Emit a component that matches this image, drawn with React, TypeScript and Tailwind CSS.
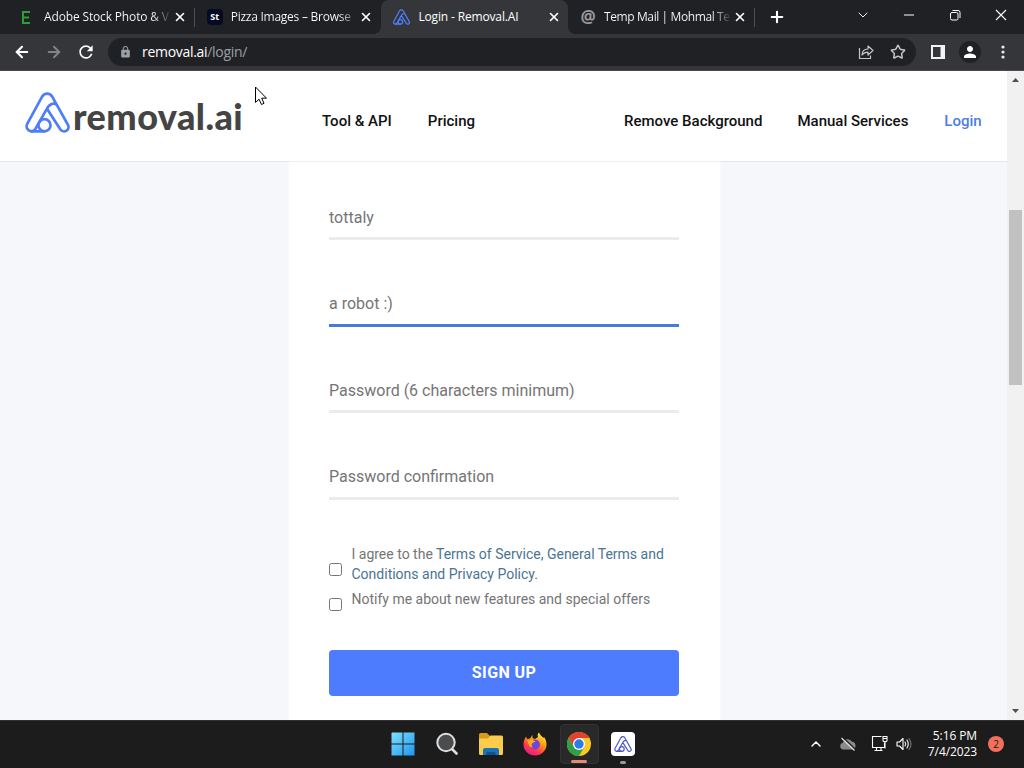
import { ArrowLeft, ArrowRight, ChevronDown, ChevronUp, Minus, Plus, Star, X } from "lucide-react"
import { MdLock, MdPerson, MdRefresh } from "react-icons/md"

const tabs = [
    { title: "Adobe Stock Photo & V", icon: "E", active: false, separator: true, tracking: "tracking-[-0.15px]" },
    { title: "Pizza Images – Browse", icon: "St", active: false, separator: false, tracking: "tracking-[-0.25px]" },
    { title: "Login - Removal.AI", icon: "logo", active: true, separator: false, tracking: "tracking-[-0.15px]" },
    { title: "Temp Mail | Mohmal Te", icon: "@", active: false, separator: true, tracking: "tracking-[-0.4px]" },
];

function LogoMark({ className, color = "#4f7df9", stroke = 8 }: { className?: string; color?: string; stroke?: number }) {
    return (
        <svg className={className} viewBox="0 0 134 122" fill="none" stroke={color} strokeWidth={stroke} strokeLinecap="round" strokeLinejoin="round">
            <path d="M67 52L105 111C115 125 137 113 127 96L81 14C74 2 58 2 51 14L7 94C-2 111 20 126 31 110L65 50C73 34 87 31 94 38" />
            <circle cx="58" cy="99" r="18" />
            <path d="M18 117H58" />
        </svg>
    );
}

function TabIcon({ icon }: { icon: string }) {
    if (icon === "logo") return <LogoMark className="w-[17px] h-4" stroke={10} />;
    if (icon === "St") return <span className="w-4 h-4 rounded-sm bg-[#050a23] text-white text-[9px] leading-4 font-bold text-center">St</span>;
    if (icon === "E") {
        return (
            <svg className="w-4 h-4" viewBox="0 0 16 16" fill="none" stroke="#2f9e35" strokeWidth="2">
                <path d="M10 3H3V14H10M3 8.5H9" />
            </svg>
        );
    }
    return <span className="w-4 text-center text-[#97989b] text-[17px] leading-4 font-bold">@</span>;
}

function TabStrip() {
    return (
        <div className="flex h-[34px] pl-2 bg-[#202124] text-white">
            {tabs.map((tab) => (
                <div
                    key={tab.title}
                    className={`relative flex items-center h-[34px] w-[186.7px] pl-3 ${tab.active ? "bg-[#35363a] rounded-t-lg" : ""}`}
                >
                    <TabIcon icon={tab.icon} />
                    <span
                        className={`ml-2 w-[127px] whitespace-nowrap text-[12px] ${tab.tracking} ${tab.active ? "" : "text-transparent bg-clip-text bg-linear-to-r from-white from-[108px] to-transparent to-[128px]"}`}
                    >
                        {tab.title}
                    </span>
                    <X className="w-3.5 h-3.5 shrink-0 ml-[1.5px]" strokeWidth={2.8} />
                    {tab.separator && <span className="absolute right-0 top-2 w-px h-[19px] bg-[#4c4d51]" />}
                    {tab.active && (
                        <>
                            <span className="absolute -left-2 bottom-0 size-2 bg-[radial-gradient(circle_at_0_0,transparent_8px,#35363a_8px)]" />
                            <span className="absolute -right-2 bottom-0 size-2 bg-[radial-gradient(circle_at_100%_0,transparent_8px,#35363a_8px)]" />
                        </>
                    )}
                </div>
            ))}
            <Plus className="w-[18px] h-[18px] ml-[13px] mt-2" strokeWidth={2.8} />
            {/* Window controls */}
            <div className="flex ml-auto h-[29px]">
                <span className="flex items-center justify-center w-[46px]"><ChevronDown className="w-4 h-4" strokeWidth={1.4} /></span>
                <span className="flex items-center justify-center w-[46px]"><Minus className="w-4 h-4" strokeWidth={1.5} /></span>
                <span className="flex items-center justify-center w-[46px]">
                    <svg className="w-3 h-3" viewBox="0 0 12 12" fill="none" stroke="white">
                        <rect x="1.5" y="3.5" width="7.5" height="7.5" rx="1.5" />
                        <path d="M3.5 1.5H9A2 2 0 0 1 11 3.5V9" />
                    </svg>
                </span>
                <span className="flex items-center justify-center w-[46px]">
                    <svg className="w-3 h-3" viewBox="0 0 12 12" stroke="white" strokeWidth="1.1"><path d="M1 1L11 11M11 1L1 11" /></svg>
                </span>
            </div>
        </div>
    );
}

function Toolbar() {
    return (
        <div className="flex items-center h-[37px] bg-[#35363a] border-b border-[#4d494b] pl-[13px] text-white">
            <ArrowLeft className="w-[18px] h-[18px]" strokeWidth={2.8} />
            <ArrowRight className="w-[18px] h-[18px] ml-3.5 text-[#828387]" strokeWidth={2.6} />
            <MdRefresh className="w-5 h-5 ml-[13px]" />
            <div className="flex items-center w-[808px] h-7 ml-3 pl-[11px] pr-2.5 rounded-full bg-[#202124]">
                <MdLock className="w-[13px] h-[14px] text-[#9aa0a6]" />
                <span className="ml-2.5 text-sm tracking-[-0.3px]">removal.ai<span className="text-[#9aa0a6]">/login/</span></span>
                <svg className="w-4 h-4 ml-auto" viewBox="0 0 16 16" fill="none" stroke="#c4c7c9" strokeWidth="1.2" strokeLinejoin="round">
                    <path d="M1.5 4V14.5H12.5V11.5" />
                    <path d="M4 11C4 7.5 6 5.2 10 5V2L15 6.5L10 11V8.2C7.3 8.2 5.5 9 4 11Z" />
                </svg>
                <Star className="w-4 h-4 ml-4 text-[#c4c7c9]" strokeWidth={2.2} strokeLinejoin="miter" />
            </div>
            <svg className="w-3.5 h-3.5 ml-[15px]" viewBox="0 0 14 14" fill="none" stroke="#f1f3f4" strokeWidth="2">
                <rect x="1" y="1" width="12" height="12" />
                <path d="M9.5 0H14V14H9.5Z" fill="#f1f3f4" stroke="none" />
            </svg>
            <span className="flex items-center justify-center w-[22px] h-[22px] ml-3.5 rounded-full bg-[#202124]"><MdPerson className="w-[18px] h-[18px]" /></span>
            <svg className="w-1 h-4 ml-5" viewBox="0 0 4 16" fill="#e8eaed">
                <circle cx="2" cy="3" r="1.6" />
                <circle cx="2" cy="8" r="1.6" />
                <circle cx="2" cy="13" r="1.6" />
            </svg>
        </div>
    );
}

function SiteHeader() {
    return (
        <div className="flex items-center shrink-0 h-[91px] bg-white border-b border-[#e4e6ea] text-[#111] font-medium text-[15px]">
            <LogoMark className="w-[45px] h-[41px] ml-[25px] mb-2" />
            <span className="w-[174px] pl-[3px] font-[Lato,sans-serif] font-black text-[36px] tracking-[0.45px] text-[#444]">removal.ai</span>
            <nav className="flex mt-[11px]">
                <span className="ml-[78px]">Tool &amp; API</span>
                <span className="ml-9">Pricing</span>
                <span className="ml-[149px]">Remove Background</span>
                <span className="ml-[35px]">Manual Services</span>
                <span className="ml-9 text-[#4d7ce8]">Login</span>
            </nav>
        </div>
    );
}

function Field({ label, active }: { label: string; active?: boolean }) {
    return (
        <div className={`flex items-center h-[46px] pt-1 mb-[40.5px] border-b-[3px] text-base ${active ? "border-[#4a7bd8]" : "border-[#ebebeb]"}`}>
            <span>{label}</span>
        </div>
    );
}

function Checkbox({ className }: { className: string }) {
    return <span className={`shrink-0 w-[13px] h-[13px] border border-[#767676] rounded-[2.5px] bg-white ${className}`} />;
}

function SignUpForm() {
    return (
        <div className="flex-1 w-[431px] ml-[289px] pl-10 pr-[41px] pt-8 bg-white shadow-[0_0_4px_rgba(255,255,255,0.8)]">
            <Field label="tottaly" />
            <Field label="a robot :)" active />
            <Field label="Password (6 characters minimum)" />
            <Field label="Password confirmation" />
            <div className="flex mt-[44.5px] text-sm leading-5">
                <Checkbox className="mt-[19px]" />
                <p className="ml-[9.5px]">
                    I agree to the <span className="text-[#4a7493]">Terms of Service, General Terms and<br />Conditions and Privacy Policy.</span>
                </p>
            </div>
            <div className="flex mt-[5px] text-sm leading-5">
                <Checkbox className="mt-[9px]" />
                <p className="ml-[9.5px]">Notify me about new features and special offers</p>
            </div>
            <button className="block w-full h-[46px] mt-[39px] rounded bg-[#4d7cfe] text-white font-bold tracking-[0.4px]">SIGN UP</button>
        </div>
    );
}

function Scrollbar() {
    return (
        <div className="flex flex-col items-center w-[17px] h-full bg-[#f1f1f1]">
            <svg className="w-[7px] h-1 mt-[7px]" viewBox="0 0 7 4" fill="#505050"><path d="M0 4L3.5 0L7 4Z" /></svg>
            <span className="w-[13px] h-[175px] mt-[128px] bg-[#c1c1c1]" />
            <svg className="w-[7px] h-1 mt-auto mb-[7px]" viewBox="0 0 7 4" fill="#505050"><path d="M0 0L3.5 4L7 0Z" /></svg>
        </div>
    );
}

function WindowsIcon() {
    return (
        <svg className="w-6 h-6" viewBox="0 0 24 24">
            <defs>
                <linearGradient id="win" x1="0" y1="0" x2="1" y2="1">
                    <stop offset="0" stopColor="#7fe0fb" />
                    <stop offset="1" stopColor="#1e96ee" />
                </linearGradient>
            </defs>
            <path d="M1 .5H11.5V11.5H.5V1ZM12.5 .5H23.5V11.5H12.5ZM.5 12.5H11.5V23.5H.5ZM12.5 12.5H23.5V23.5H12.5Z" fill="url(#win)" />
        </svg>
    );
}

function SearchIcon() {
    return (
        <svg className="w-6 h-6" viewBox="0 0 24 24" fill="#4a4c4e" stroke="#dedede">
            <path d="M17 17L21.5 21.5" strokeWidth="2.6" strokeLinecap="round" />
            <circle cx="11" cy="10.5" r="8.7" strokeWidth="2" />
        </svg>
    );
}

function FolderIcon() {
    return (
        <svg className="w-6 h-6" viewBox="0 0 24 24">
            <path d="M0 2.5Q0 1 1.5 1H8L11 4V8H0Z" fill="#d99a16" />
            <path d="M0 6.5H9L11.5 3.5H22.5Q24 3.5 24 5V21.5Q24 23 22.5 23H1.5Q0 23 0 21.5Z" fill="#fbcb4b" />
            <path d="M4 23V18Q4 16 6 16H18Q20 16 20 18V23Z" fill="#1873b8" />
            <path d="M7.5 23V21Q7.5 20 8.5 20H15.5Q16.5 20 16.5 21V23Z" fill="#0d5590" />
        </svg>
    );
}

function FirefoxIcon() {
    return (
        <svg className="w-6 h-6" viewBox="0 0 24 24">
            <defs>
                <linearGradient id="fox" x1="0.8" y1="0" x2="0.25" y2="1">
                    <stop offset="0" stopColor="#fff44f" />
                    <stop offset="0.4" stopColor="#ff980e" />
                    <stop offset="0.7" stopColor="#ff3b50" />
                    <stop offset="1" stopColor="#e5178c" />
                </linearGradient>
            </defs>
            <path d="M3 4.5L4.2 7L7 6.5L9.5 3V6L12 7L15 5C14 3 15 1.5 16 .5C17 3.5 19 4 20.5 6L21 5C23 8 23.5 10 23.5 12.5A11.5 11 0 0 1 .5 12.5C.5 9.5 1.5 7 3 4.5Z" fill="url(#fox)" />
            <circle cx="12" cy="12.5" r="5" fill="#7545d8" />
            <path d="M4.5 8.5Q9 6.5 12.5 9.5L9.5 11Q7.5 13 10 15.5Q5 15 4.5 8.5Z" fill="#ffac24" />
        </svg>
    );
}

function ChromeIcon() {
    return (
        <svg className="w-6 h-6" viewBox="0 0 24 24">
            <circle cx="12" cy="12" r="12" fill="#fbc926" />
            <path d="M1.6 6A12 12 0 0 1 22.4 6H12L6.8 15Z" fill="#e2412f" />
            <path d="M1.6 6A12 12 0 0 0 12 24L17.2 15L12 12L6.8 15Z" fill="#2da04a" />
            <circle cx="12" cy="12" r="6" fill="white" />
            <circle cx="12" cy="12" r="4.7" fill="#2b7bea" />
        </svg>
    );
}

function Taskbar() {
    return (
        <div className="flex items-center h-12 pb-0.5 bg-[#1c1c1c] border-t border-[#303030] text-white">
            <div className="flex items-center ml-[381px]">
                <span className="flex justify-center w-11"><WindowsIcon /></span>
                <span className="flex justify-center w-11"><SearchIcon /></span>
                <span className="flex justify-center w-11"><FolderIcon /></span>
                <span className="flex justify-center w-11"><FirefoxIcon /></span>
                <span className="relative flex items-center justify-center w-[39px] h-10 mx-[2.5px] rounded bg-[#292929] border border-[#323232]">
                    <ChromeIcon />
                    <span className="absolute bottom-0 w-4 h-[3px] rounded-full bg-[#ec8872]" />
                </span>
                <span className="relative flex items-center justify-center w-11 h-10">
                    <span className="flex items-center justify-center w-6 h-6 rounded bg-white"><LogoMark className="w-[18px] h-4" color="#4e57c8" stroke={9} /></span>
                    <span className="absolute bottom-0 w-1.5 h-[3px] rounded-full bg-[#9a9a9a]" />
                </span>
            </div>
            {/* System tray */}
            <ChevronUp className="w-4 h-4 ml-[163px]" strokeWidth={2.2} />
            <svg className="w-4 h-4 ml-4" viewBox="0 0 16 16">
                <path d="M3.5 13.5A3.4 3.4 0 0 1 2.8 6.8A5 5 0 0 1 12 5.8A3.9 3.9 0 0 1 12.4 13.5Z" fill="#8b8b8b" />
                <path d="M2.5 1L15.5 13.5" stroke="#1c1c1c" strokeWidth="1.2" />
                <path d="M1.5 2L14.5 14.5" stroke="#dedede" strokeWidth="1.2" />
            </svg>
            <svg className="w-[17px] h-[17px] ml-[15px]" viewBox="0 0 17 17" fill="none" stroke="white" strokeWidth="1.1">
                <path d="M10.5 1.5H1.5V12.5H13.5V7.5M5.5 12.5V15.5M10 12.5V15.5M3.5 15.5H11.5" />
                <path d="M12 1.5H16V5.5Q16 6.5 15 6.5H13Q12 6.5 12 5.5ZM14 6.5V13.5M12 3.5H16" />
            </svg>
            <svg className="w-4 h-4 ml-2" viewBox="0 0 16 16" fill="none" stroke="white" strokeWidth="1.1" strokeLinejoin="round" strokeLinecap="round">
                <path d="M1 6H3.5L7 2.5V13.5L3.5 10H1Z" />
                <path d="M9 6Q10.5 8 9 10M11 4Q13.5 8 11 12" />
                <path d="M13 2.5Q17 8 13 13.5" stroke="#777" />
            </svg>
            <div className="w-[65px] text-right text-[12px] leading-4 tracking-[-0.1px]">
                <p>5:16 PM</p>
                <p>7/4/2023</p>
            </div>
            <span className="w-4 h-4 ml-[11px] rounded-full bg-[#f0705d] text-[#2a1614] text-[10px] leading-4 text-center">2</span>
        </div>
    );
}

function App() {
    return (
        <div className="relative flex flex-col w-[1024px] h-[768px] overflow-hidden font-['Open_Sans',sans-serif]">
            <TabStrip />
            <Toolbar />
            <div className="flex h-[649px] bg-[#f5f7fa] font-[Roboto,sans-serif] text-[#757575]">
                <div className="flex flex-col w-[1007px] h-full">
                    <SiteHeader />
                    <SignUpForm />
                </div>
                <Scrollbar />
            </div>
            <Taskbar />
            {/* Mouse pointer */}
            <svg className="absolute left-[255px] top-[86px] w-3 h-[19px]" viewBox="0 0 12 19" fill="white" stroke="black" strokeWidth="1">
                <path d="M.5 1V16.5L4 13.2L6.5 18.5L9 17.3L6.7 12.2H11.5Z" />
            </svg>
        </div>
    );
}

export default App
